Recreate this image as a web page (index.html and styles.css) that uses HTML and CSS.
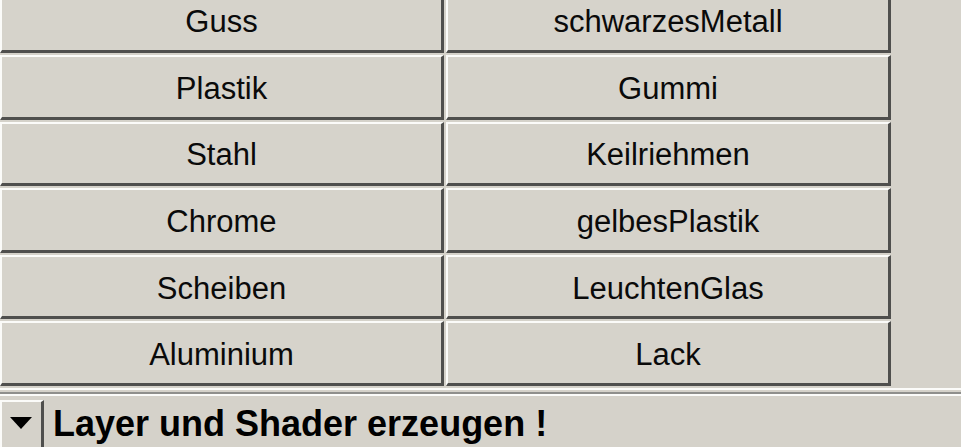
FILE: index.html
```html
<!DOCTYPE html>
<html>
<head>
<meta charset="utf-8">
<link rel="stylesheet" href="styles.css">
</head>
<body>
<div class="page">
  <div class="grid">
    <div class="btn">Guss</div>
    <div class="btn">schwarzesMetall</div>
    <div class="btn">Plastik</div>
    <div class="btn">Gummi</div>
    <div class="btn">Stahl</div>
    <div class="btn">Keilriehmen</div>
    <div class="btn">Chrome</div>
    <div class="btn">gelbesPlastik</div>
    <div class="btn">Scheiben</div>
    <div class="btn">LeuchtenGlas</div>
    <div class="btn">Aluminium</div>
    <div class="btn">Lack</div>
  </div>
  <div class="sep"></div>
  <div class="bar">
    <div class="drop">
      <svg class="tri" width="22" height="12" viewBox="0 0 22 12"><polygon points="0,0 22,0 11,12" fill="#000"/></svg>
    </div>
    <div class="title">Layer und Shader erzeugen !</div>
  </div>
</div>
</body>
</html>
```
FILE: styles.css
```css
html, body {
  margin: 0;
  padding: 0;
  background: #d5d2ca;
  width: 961px;
  height: 447px;
  overflow: hidden;
}
.page {
  display: flex;
  flex-direction: column;
  font-family: "Liberation Sans", Arial, sans-serif;
  color: #0a0a0a;
}
.grid {
  display: grid;
  grid-template-columns: 444px 445px;
  grid-auto-rows: 64.6px;
  column-gap: 2px;
  row-gap: 2px;
  margin-top: -11.6px;
}
.btn {
  box-sizing: border-box;
  display: flex;
  align-items: center;
  justify-content: center;
  background: #d6d3cb;
  border-top: 2px solid #fbfbf9;
  border-left: 2px solid #fbfbf9;
  border-right: 3px solid #4f4f4d;
  border-bottom: 3px solid #4f4f4d;
  font-size: 31px;
  padding-top: 4px;
}
.sep {
  margin-top: 2px;
  height: 8px;
  background: linear-gradient(to bottom, #fbfbf9 0 2px, #d5d2ca 2px 4px, #8f8f8c 4px 6px, #fbfbf9 6px 8px);
}
.bar {
  margin-top: 4px;
  display: flex;
  align-items: flex-start;
  height: 60px;
}
.drop {
  box-sizing: border-box;
  width: 44px;
  height: 60px;
  border-top: 2px solid #fbfbf9;
  border-left: 2px solid #fbfbf9;
  border-right: 3px solid #4f4f4d;
  padding-top: 15px;
  padding-left: 8px;
}
.tri {
  display: block;
}
.title {
  margin-left: 9px;
  margin-top: 6px;
  font-weight: bold;
  font-size: 36px;
  line-height: 36px;
  color: #000;
}
```
